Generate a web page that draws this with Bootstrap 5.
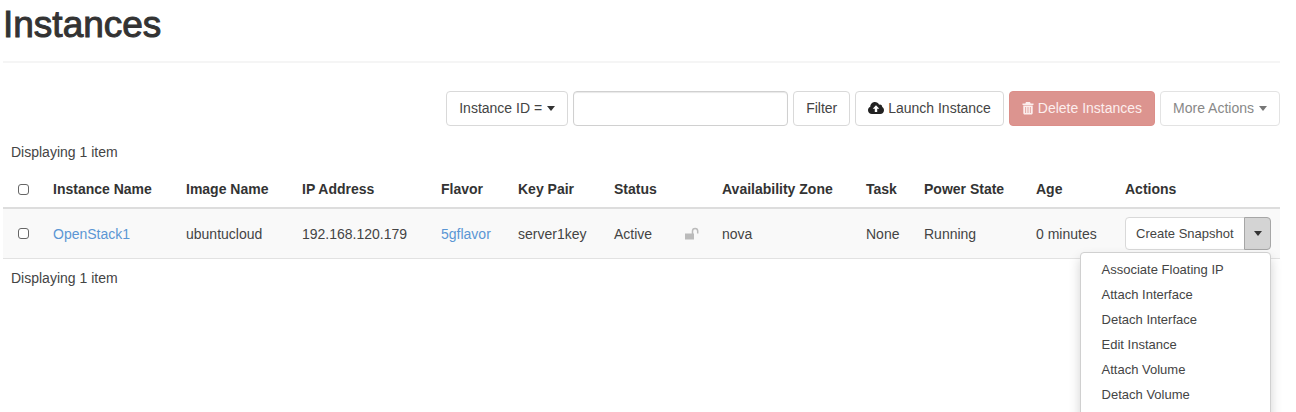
<!DOCTYPE html>
<html lang="en">
<head>
<meta charset="utf-8">
<meta name="viewport" content="width=device-width, initial-scale=1">
<title>Instances</title>
<link rel="stylesheet" href="https://cdn.jsdelivr.net/npm/bootstrap@5.3.0/dist/css/bootstrap.min.css">
<style>
  body { font-family: "Liberation Sans", Arial, sans-serif; font-size: 14px; line-height: 20px; color: #444; height: 100vh; overflow: hidden; }
  .page { padding: 4px 16px 0 3px; }
  .page-title { font-size: 37px; line-height: 42px; font-weight: 400; color: #333; -webkit-text-stroke: 1px #333; padding-bottom: 15px; border-bottom: 2px solid #f5f5f5; margin-bottom: 28px; }
  .toolbar { gap: 5px; }
  .btn { --bs-btn-font-size: 14px; --bs-btn-line-height: 21px; --bs-btn-padding-x: 12px; --bs-btn-padding-y: 6px; --bs-btn-border-radius: 4px; white-space: nowrap; }
  .btn-plain { --bs-btn-color: #444; --bs-btn-bg: #fff; --bs-btn-border-color: #d9d9d9; --bs-btn-hover-bg: #eee; --bs-btn-hover-border-color: #bbb; --bs-btn-active-bg: #d4d4d4; --bs-btn-active-border-color: #a6a6a6; --bs-btn-disabled-color: #888; --bs-btn-disabled-bg: #fff; --bs-btn-disabled-border-color: #e3e3e3; --bs-btn-disabled-opacity: 1; }
  .btn-remove { --bs-btn-disabled-color: #fceeed; --bs-btn-disabled-bg: #dc948f; --bs-btn-disabled-border-color: #dc8e89; --bs-btn-disabled-opacity: 1; }
  .btn-row { --bs-btn-font-size: 13px; --bs-btn-line-height: 21px; --bs-btn-padding-x: 10px; --bs-btn-padding-y: 5px; }
  .dropdown-toggle::after { border-width: 5px 4px 0; margin-left: 5px; vertical-align: 2px; color: #333; }
  .dropdown-toggle:disabled::after { color: #777; }
  .btn-row.dropdown-toggle::after { margin-left: 0; }
  .btn-row.dropdown-toggle-split { padding-left: 9px; padding-right: 8px; }
  .filter-text { width: 215px; height: 35px; border-color: #d0d0d0; border-radius: 4px; box-shadow: inset 0 1px 1px #e8e8e8; }
  .glyph { width: 16px; height: 14px; fill: currentColor; vertical-align: -2px; }
  .glyph-bin { width: 12px; }
  .launch-glyph { color: #222; }
  .count { padding: 0 8px; }
  .instances { table-layout: fixed; --bs-table-color: #444; border-color: #e2e2e2; margin: 9px 0; }
  .instances th, .instances td { padding: 8px; vertical-align: middle; white-space: nowrap; border-width: 0; }
  .instances thead th { border-bottom: 2px solid #ddd; color: #333; }
  .instances tbody td { background: #f9f9f9; border-bottom: 1px solid #e2e2e2; }
  .instances a.name { color: #5b96d4; text-decoration: none; }
  .c-check { width: 42px; } .c-name { width: 133px; } .c-image { width: 116px; } .c-ip { width: 139px; }
  .c-flavor { width: 77px; } .c-key { width: 96px; } .c-status { width: 71px; } .c-lock { width: 37px; }
  .c-zone { width: 144px; } .c-task { width: 58px; } .c-power { width: 112px; } .c-age { width: 89px; } .c-actions { width: 163px; }
  .tick { appearance: none; display: block; width: 11px; height: 11px; margin: 0 0 0 7px; border: 1px solid #666; border-radius: 3px; background: #fff; }
  .tick:checked { background: #5b96d4; }
  .row-menu { --bs-dropdown-font-size: 13px; --bs-dropdown-min-width: 191px; --bs-dropdown-padding-y: 4px; --bs-dropdown-border-color: #d0d0d0; --bs-dropdown-border-radius: 4px; --bs-dropdown-item-padding-x: 21px; --bs-dropdown-item-padding-y: 3px; --bs-dropdown-link-color: #444; top: 100%; right: 0; margin-top: 2px; padding-bottom: 24px; line-height: 19px; box-shadow: 0 6px 12px rgba(0,0,0,.18); }
</style>
</head>
<body>
<main class="page">
  <h1 class="page-title mt-0">Instances</h1>

  <form class="toolbar d-flex justify-content-end">
    <button type="button" class="btn btn-plain dropdown-toggle">Instance ID =</button>
    <input type="text" class="form-control filter-text" aria-label="Filter value">
    <button type="button" class="btn btn-plain">Filter</button>
    <button type="button" class="btn btn-plain"><svg class="glyph launch-glyph" viewBox="0 0 16 14" aria-hidden="true"><path fill-rule="evenodd" d="M4 13C1.700 13 0 11.400 0 9.300 0 7.700 1 6.300 2.300 5.800 2.200 3.200 4.200 1 6.900 1c1.900 0 3.500 1.100 4.200 2.700 1.700-.6 3.200.6 3.100 2.300C15.300 6.600 16 7.800 16 9.200 16 11.300 14.400 13 12.300 13ZM8 4.300 4.700 7.800h2.100V11h2.400V7.800h2.100Z"/></svg> Launch Instance</button>
    <button type="button" class="btn btn-remove" disabled><svg class="glyph glyph-bin" viewBox="0 0 12 14" aria-hidden="true"><path fill-rule="evenodd" d="M4 1h4l.7 1.500H11.500V4H.5V2.500h2.800ZM1.300 4.500h9.400V12c0 .8-.5 1.500-1.300 1.500H2.600c-.8 0-1.300-.7-1.300-1.500ZM3.300 6v6h.8V6Zm2.300 0v6h.8V6Zm2.300 0v6h.8V6Z"/></svg> Delete Instances</button>
    <button type="button" class="btn btn-plain dropdown-toggle" disabled>More Actions</button>
  </form>

  <div class="count mt-3">Displaying 1 item</div>

  <table class="table instances">
    <colgroup>
      <col class="c-check"><col class="c-name"><col class="c-image"><col class="c-ip"><col class="c-flavor"><col class="c-key"><col class="c-status"><col class="c-lock"><col class="c-zone"><col class="c-task"><col class="c-power"><col class="c-age"><col class="c-actions">
    </colgroup>
    <thead>
      <tr>
        <th><input type="checkbox" class="tick" aria-label="Select all"></th>
        <th>Instance Name</th><th>Image Name</th><th>IP Address</th><th>Flavor</th><th>Key Pair</th><th>Status</th><th></th><th>Availability Zone</th><th>Task</th><th>Power State</th><th>Age</th><th>Actions</th>
      </tr>
    </thead>
    <tbody>
      <tr>
        <td><input type="checkbox" class="tick" aria-label="Select OpenStack1"></td>
        <td><a class="name" href="#">OpenStack1</a></td>
        <td>ubuntucloud</td>
        <td>192.168.120.179</td>
        <td><a class="name" href="#">5gflavor</a></td>
        <td>server1key</td>
        <td>Active</td>
        <td><svg class="glyph" viewBox="0 0 16 14" role="img" aria-label="Unlocked"><path fill="#bbb" d="M0 6.500h9v6H0Z"/><path fill="none" stroke="#bbb" stroke-width="1.500" d="M7.500 7V4a2.600 2.600 0 0 1 5.200 0v2.500"/></svg></td>
        <td>nova</td>
        <td>None</td>
        <td>Running</td>
        <td>0 minutes</td>
        <td>
          <div class="btn-group d-inline-flex align-top">
            <button type="button" class="btn btn-plain btn-row">Create Snapshot</button>
            <button type="button" class="btn btn-plain btn-row dropdown-toggle dropdown-toggle-split active" aria-expanded="true" aria-label="More instance actions"></button>
            <ul class="dropdown-menu row-menu show">
              <li><a class="dropdown-item" href="#">Associate Floating IP</a></li>
              <li><a class="dropdown-item" href="#">Attach Interface</a></li>
              <li><a class="dropdown-item" href="#">Detach Interface</a></li>
              <li><a class="dropdown-item" href="#">Edit Instance</a></li>
              <li><a class="dropdown-item" href="#">Attach Volume</a></li>
              <li><a class="dropdown-item" href="#">Detach Volume</a></li>
            </ul>
          </div>
        </td>
      </tr>
    </tbody>
  </table>

  <div class="count">Displaying 1 item</div>
</main>
<script src="https://cdn.jsdelivr.net/npm/bootstrap@5.3.0/dist/js/bootstrap.bundle.min.js"></script>
</body>
</html>
